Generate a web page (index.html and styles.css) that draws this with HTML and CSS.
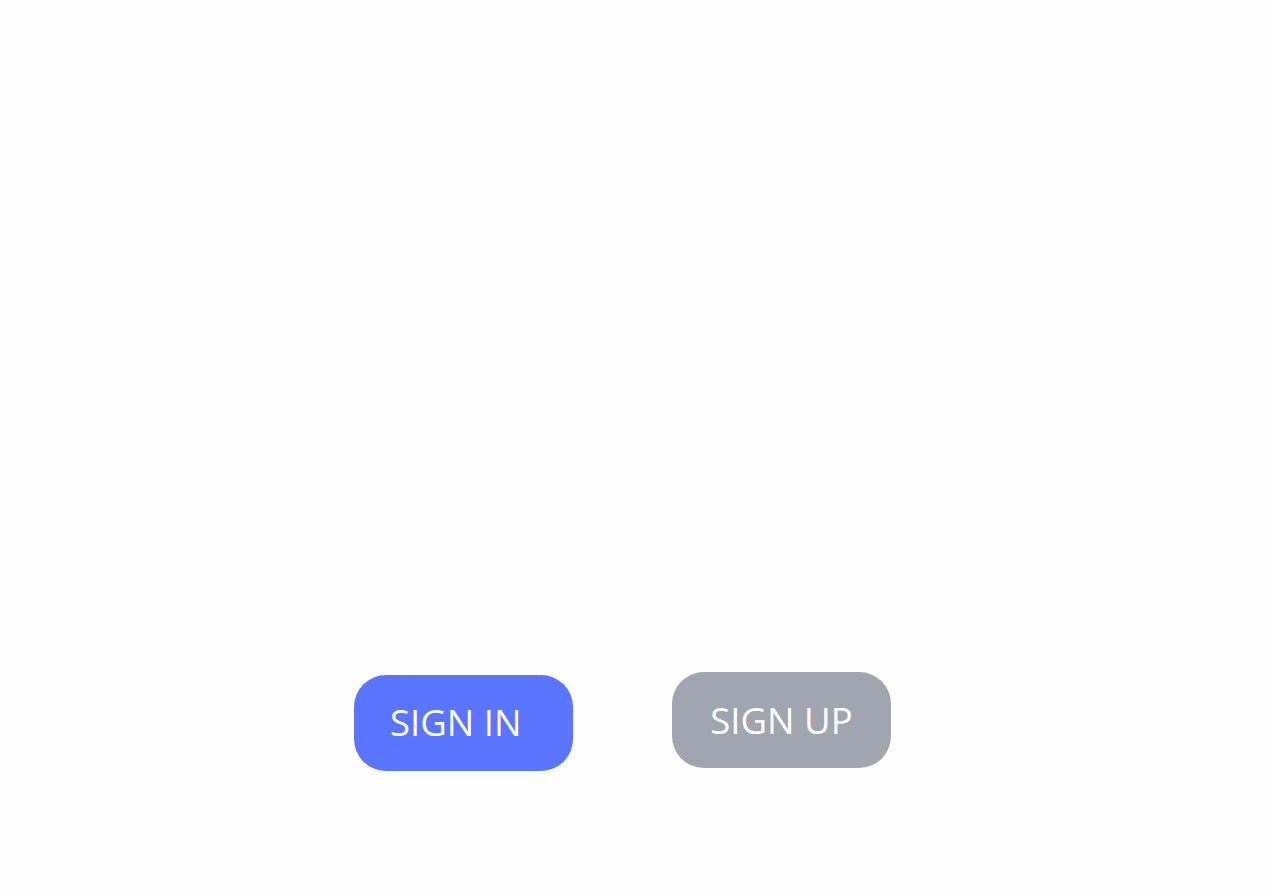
FILE: index.html
```html
<!DOCTYPE html>
<html>
<head>
<meta charset="utf-8">
<link rel="stylesheet" href="styles.css">
</head>
<body>
<div class="page">
  <div class="actions">
    <button class="btn btn-primary">SIGN IN</button>
    <button class="btn btn-secondary">SIGN UP</button>
  </div>
</div>
</body>
</html>
```
FILE: styles.css
```css
html, body {
  margin: 0;
  padding: 0;
  background: #fefefe;
}
.page {
  width: 1269px;
  height: 894px;
  box-sizing: border-box;
  padding-top: 672px;
  padding-left: 354px;
}
.actions {
  display: flex;
  align-items: flex-start;
  gap: 99px;
}
.btn {
  width: 219px;
  height: 96px;
  border: none;
  border-radius: 32px;
  color: #ffffff;
  font-family: "Open Sans", "Noto Sans", sans-serif;
  font-size: 36.5px;
  font-weight: 400;
  padding: 0;
  cursor: pointer;
  box-sizing: border-box;
}
.btn-primary {
  background: #5a75ff;
  margin-top: 3px;
  text-align: left;
  padding-left: 36px;
  padding-bottom: 2px;
}
.btn-secondary {
  background: #a1a5af;
  padding-bottom: 0;
}
```
